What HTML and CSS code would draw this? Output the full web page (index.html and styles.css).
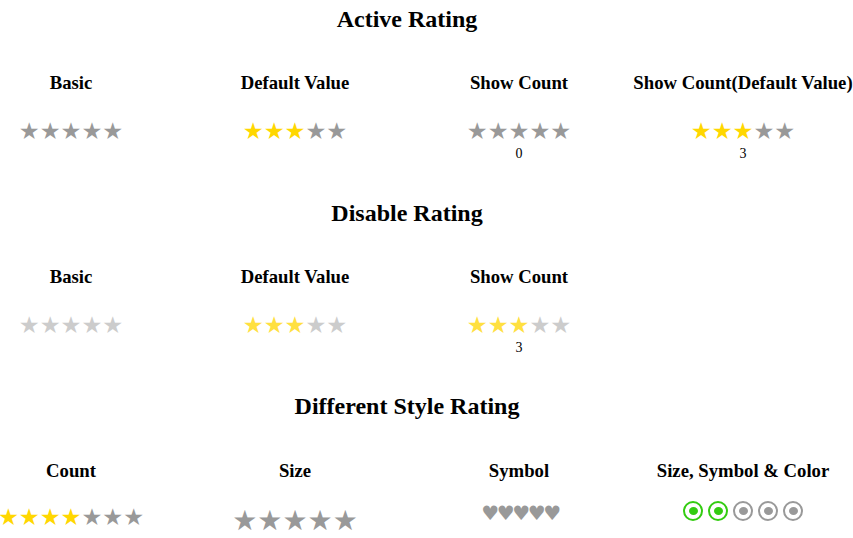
FILE: index.html
```html
<!DOCTYPE html>
<html>
<head>
<meta charset="utf-8">
<link rel="stylesheet" href="styles.css">
</head>
<body>
<div class="page">
  <section class="section">
    <h2 class="title">Active Rating</h2>
    <div class="grid">
      <div class="item">
        <div class="label">Basic</div>
        <div class="rate"><span class="off">★</span><span class="off">★</span><span class="off">★</span><span class="off">★</span><span class="off">★</span></div>
      </div>
      <div class="item">
        <div class="label">Default Value</div>
        <div class="rate"><span class="on">★</span><span class="on">★</span><span class="on">★</span><span class="off">★</span><span class="off">★</span></div>
      </div>
      <div class="item">
        <div class="label">Show Count</div>
        <div class="rate"><span class="off">★</span><span class="off">★</span><span class="off">★</span><span class="off">★</span><span class="off">★</span></div>
        <div class="count">0</div>
      </div>
      <div class="item">
        <div class="label">Show Count(Default Value)</div>
        <div class="rate"><span class="on">★</span><span class="on">★</span><span class="on">★</span><span class="off">★</span><span class="off">★</span></div>
        <div class="count">3</div>
      </div>
    </div>
  </section>
  <section class="section section-disabled">
    <h2 class="title">Disable Rating</h2>
    <div class="grid">
      <div class="item">
        <div class="label">Basic</div>
        <div class="rate disabled"><span class="off">★</span><span class="off">★</span><span class="off">★</span><span class="off">★</span><span class="off">★</span></div>
      </div>
      <div class="item">
        <div class="label">Default Value</div>
        <div class="rate disabled"><span class="on">★</span><span class="on">★</span><span class="on">★</span><span class="off">★</span><span class="off">★</span></div>
      </div>
      <div class="item">
        <div class="label">Show Count</div>
        <div class="rate disabled"><span class="on">★</span><span class="on">★</span><span class="on">★</span><span class="off">★</span><span class="off">★</span></div>
        <div class="count">3</div>
      </div>
    </div>
  </section>
  <section class="section section-styles">
    <h2 class="title">Different Style Rating</h2>
    <div class="grid">
      <div class="item">
        <div class="label">Count</div>
        <div class="rate"><span class="on">★</span><span class="on">★</span><span class="on">★</span><span class="on">★</span><span class="off">★</span><span class="off">★</span><span class="off">★</span></div>
      </div>
      <div class="item">
        <div class="label">Size</div>
        <div class="rate big"><span class="off">★</span><span class="off">★</span><span class="off">★</span><span class="off">★</span><span class="off">★</span></div>
      </div>
      <div class="item">
        <div class="label">Symbol</div>
        <div class="rate hearts"><span class="off">♥</span><span class="off">♥</span><span class="off">♥</span><span class="off">♥</span><span class="off">♥</span></div>
      </div>
      <div class="item">
        <div class="label">Size, Symbol &amp; Color</div>
        <div class="circles"><span class="ring green"></span><span class="ring green"></span><span class="ring"></span><span class="ring"></span><span class="ring"></span></div>
      </div>
    </div>
  </section>
</div>
</body>
</html>
```

FILE: styles.css
```css
html, body {
  margin: 0;
  padding: 0;
  background: #fff;
}
body {
  font-family: "Liberation Serif", "Times New Roman", serif;
  color: #000;
}
.page {
  width: 814px;
  padding-top: 5px;
}
.section {
  margin-bottom: 37px;
}
.section-disabled {
  margin-bottom: 36px;
}
.title {
  margin: 0 0 39px;
  font-size: 24px;
  line-height: 28px;
  font-weight: bold;
  text-align: center;
}
.grid {
  display: grid;
  grid-template-columns: repeat(4, 142px);
  column-gap: 82px;
}
.item {
  display: flex;
  flex-direction: column;
  align-items: center;
}
.label {
  font-size: 18.72px;
  line-height: 22px;
  font-weight: bold;
  white-space: nowrap;
  margin-bottom: 23px;
}
.section-styles .title {
  margin-bottom: 40px;
}
.section-styles .label {
  margin-bottom: 21px;
}
.rate {
  font-family: "DejaVu Sans", sans-serif;
  font-size: 23.3px;
  line-height: 28px;
  white-space: nowrap;
}
.off { color: #999999; }
.on { color: #ffd700; }
.disabled .off { color: #cccccc; }
.disabled .on { color: #ffe040; }
.big { font-size: 28px; line-height: 36px; }
.hearts {
  font-size: 20px;
  line-height: 20px;
  letter-spacing: -2.4px;
  padding-left: 2px;
}
.circles {
  display: flex;
  gap: 5px;
  margin-top: -2px;
}
.ring {
  width: 20px;
  height: 20px;
  box-sizing: border-box;
  border: 2px solid #999999;
  border-radius: 50%;
  display: flex;
  align-items: center;
  justify-content: center;
}
.ring::after {
  content: "";
  width: 9px;
  height: 8px;
  border-radius: 50%;
  background: #999999;
}
.ring.green { border-color: #33cc11; }
.ring.green::after { background: #33cc11; }
.count {
  font-size: 14px;
  line-height: 16px;
  margin-top: 1px;
}
```
